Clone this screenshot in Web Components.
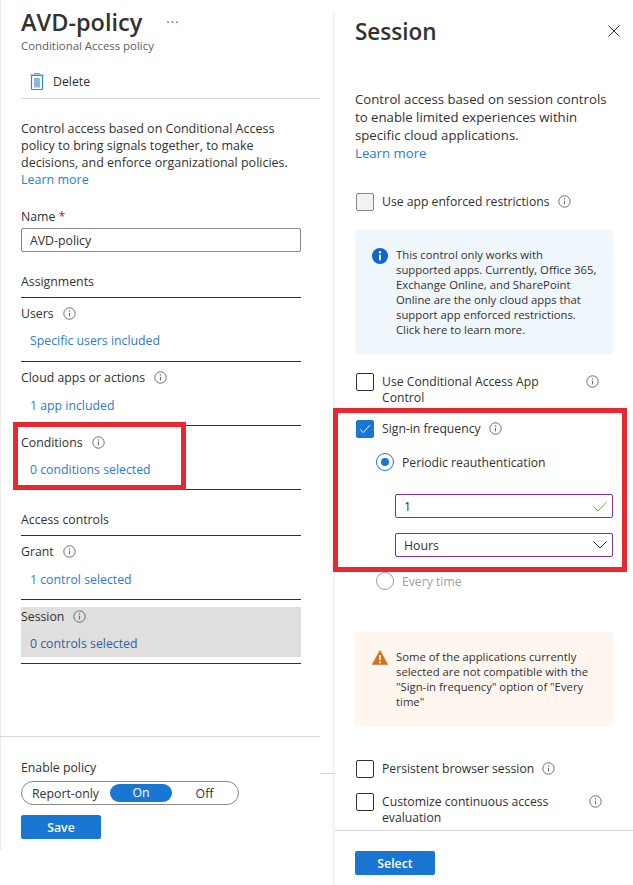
<!DOCTYPE html>
<html>
<head>
<meta charset="utf-8">
<title>AVD-policy</title>
<style>
  html, body { margin: 0; padding: 0; background: #fff; }
  body { font-family: "Open Sans", "Liberation Sans", sans-serif; color: #323130; width: 633px; height: 885px; overflow: hidden; position: relative; }
</style>
</head>
<body>
<az-page></az-page>

<script>
const INFO_SVG = `<svg width="13" height="13" viewBox="0 0 13 13" fill="none"><circle cx="6.5" cy="6.5" r="5.7" stroke="#6e6c6a" stroke-width="1"/><path d="M6.500 5.800v3.600" stroke="#6e6c6a" stroke-width="1.100"/><circle cx="6.500" cy="3.900" r=".75" fill="#6e6c6a"/></svg>`;

class AzInfo extends HTMLElement {
    constructor(){
        super();
        this.attachShadow({mode: 'open'});
        this.shadowRoot.innerHTML = `
        <style>
            :host { display: inline-flex; width: 13px; height: 13px; flex: none; }
        </style>
        ${INFO_SVG}`;
    }
}

// assignment row on the left blade: label, info icon, link and bottom rule
class AzRow extends HTMLElement {
    constructor(){
        super();
        this.attachShadow({mode: 'open'});
        this.shadowRoot.innerHTML = `
        <style>
            :host { display: block; width: 280px; border-bottom: 1px solid #323130; height: 64px; box-sizing: border-box; }
            .label { display: flex; align-items: center; gap: 9px; height: 17px; padding-top: var(--top, 7px); font-size: 12.3px; }
            .link { display: block; font-size: 12.3px; color: #2b7cd3; padding: var(--link, 10px) 0 0 9px; line-height: 17px; }
            :host(.active) { border-bottom: 0; height: 50px; background: #e1dfdd; }
            :host(.active) .label { padding-top: 1px; }
            :host(.active) .link { color: #2a62a8; }
        </style>
        <div class="label"><slot name="label"></slot><az-info></az-info></div>
        <span class="link"><slot></slot></span>`;
    }
}

class AzCheck extends HTMLElement {
    constructor(){
        super();
        this.attachShadow({mode: 'open'});
        this.shadowRoot.innerHTML = `
        <style>
            :host { display: flex; align-items: flex-start; width: 258px; margin-left: 1px; font-size: 12.2px; line-height: 16px; }
            .box { width: 18px; height: 18px; box-sizing: border-box; border: 1px solid #323130; border-radius: 2px; flex: none; margin-right: 8px; display: flex; align-items: center; justify-content: center; }
            .text { width: var(--text-w, auto); padding-top: 1px; }
            az-info { margin-left: 8px; margin-top: 2px; }
            svg { display: none; }
            :host([disabled]) .box { background: #f3f2f1; border-color: #8a8886; }
            :host([checked]) .box { background: #1976d2; border-color: #1976d2; }
            :host([checked]) svg { display: block; }
        </style>
        <span class="box"><svg width="12" height="10" viewBox="0 0 12 10" fill="none"><path d="M1 5.200 4.200 8.600 11 1.200" stroke="#fff" stroke-width="1"/></svg></span>
        <span class="text"><slot></slot></span>
        <az-info></az-info>`;
    }
}

class AzRadio extends HTMLElement {
    constructor(){
        super();
        this.attachShadow({mode: 'open'});
        this.shadowRoot.innerHTML = `
        <style>
            :host { display: flex; align-items: center; gap: 8px; font-size: 12.2px; height: 18px; }
            .dot { width: 18px; height: 18px; box-sizing: border-box; border-radius: 50%; border: 1px solid #1976d2; display: flex; align-items: center; justify-content: center; flex: none; }
            .dot i { width: 8px; height: 8px; border-radius: 50%; background: #1976d2; }
            :host([disabled]) { color: #a19f9d; }
            :host([disabled]) .dot { border-color: #a19f9d; }
            :host([disabled]) .dot i { display: none; }
        </style>
        <span class="dot"><i></i></span><span><slot></slot></span>`;
    }
}

class AzMessage extends HTMLElement {
    constructor(){
        super();
        const warning = this.getAttribute('kind') === 'warning';
        const icon = warning
            ? `<svg width="16" height="15" viewBox="0 0 16 15"><path d="M8 .5 15.800 14.500H.2Z" fill="#d9701f" stroke="#d9701f" stroke-linejoin="round" stroke-width=".6"/><path d="M8 5v5" stroke="#fff" stroke-width="1.700"/><circle cx="8" cy="12.200" r="1" fill="#fff"/></svg>`
            : `<svg width="16" height="16" viewBox="0 0 16 16"><circle cx="8" cy="8" r="8" fill="#0f66d0"/><path d="M8 6.800v5.400" stroke="#fff" stroke-width="2"/><circle cx="8" cy="4.200" r="1.200" fill="#fff"/></svg>`;
        this.attachShadow({mode: 'open'});
        this.shadowRoot.innerHTML = `
        <style>
            :host { display: flex; width: 258px; box-sizing: border-box; padding: 17px 16px 0 17px; border-radius: 2px; background: #eff6fc; font-size: 11.3px; line-height: 15px; }
            :host([kind=warning]) { background: #fff6f0; }
            .icon { flex: none; width: 16px; margin-right: 8px; margin-top: 1px; }
        </style>
        <span class="icon">${icon}</span><span><slot></slot></span>`;
    }
}

class AzButton extends HTMLElement {
    constructor(){
        super();
        this.attachShadow({mode: 'open'});
        this.shadowRoot.innerHTML = `
        <style>
            :host { display: flex; align-items: center; justify-content: center; width: 80px; height: 24px; background: #1976d2; color: #fff; font-size: 12.3px; font-weight: 600; border-radius: 2px; }
        </style>
        <slot></slot>`;
    }
}

class AzField extends HTMLElement {
    constructor(){
        super();
        this.attachShadow({mode: 'open'});
        this.shadowRoot.innerHTML = `
        <style>
            :host { display: flex; align-items: center; justify-content: space-between; box-sizing: border-box; width: 218px; height: 24px; padding: 0 5px 0 8px; border: 1px solid #862d9f; border-radius: 2px; font-size: 12.3px; }
            :host(.plain) { border-color: #8a8886; width: 280px; }
            svg { display: block; }
        </style>
        <span><slot></slot></span><slot name="end"></slot>`;
    }
}

class AzToggle extends HTMLElement {
    constructor(){
        super();
        this.attachShadow({mode: 'open'});
        this.shadowRoot.innerHTML = `
        <style>
            :host { display: flex; align-items: center; box-sizing: border-box; width: 218px; height: 24px; padding: 0 1px 0 10px; border: 1px solid #8a8886; border-radius: 12px; font-size: 12.3px; }
            .a { width: 78px; }
            .on { width: 62px; height: 18px; border-radius: 9px; background: #1976d2; color: #fff; text-align: center; line-height: 18px; }
            .off { flex: 1; text-align: center; }
        </style>
        <span class="a">Report-only</span><span class="on">On</span><span class="off">Off</span>`;
    }
}

class AzPolicyBlade extends HTMLElement {
    constructor(){
        super();
        this.attachShadow({mode: 'open'});
        this.shadowRoot.innerHTML = `
        <style>
            :host { display: block; width: 320px; height: 850px; box-sizing: border-box; padding-left: 21px; border-left: 1px solid #eceaea; margin-left: 0; }
            .pad { margin-left: -1px; }
            h1 { margin: 0; font-size: 23.5px; font-weight: 600; height: 38px; line-height: 44px; display: flex; gap: 24px; }
            h1 span { font-size: 13px; font-weight: 400; color: #605e5c; line-height: 44px; letter-spacing: 1px; }
            .sub { font-size: 11.4px; line-height: 15px; color: #605e5c; }
            .bar { display: flex; align-items: center; gap: 9px; height: 33px; padding-top: 12px; margin-left: 9px; font-size: 12.3px; }
            hr { border: 0; border-top: 1px solid #d8d6d4; margin: 0; }
            .bar + hr { width: 299px; }
            p { margin: 21px 0 0; font-size: 12.5px; line-height: 17px; width: 270px; }
            a { color: #2b7cd3; }
            .name { margin-top: 20px; font-size: 12.3px; line-height: 17px; height: 20px; }
            .name b { color: #a4262c; font-weight: 400; }
            h2 { margin: 0; font-size: 12.3px; font-weight: 400; width: 280px; border-bottom: 1px solid #323130; line-height: 17px; }
            .h1 { padding-top: 21px; padding-bottom: 7px; }
            .h2 { padding-top: 21px; padding-bottom: 7px; }
            az-row.active { margin-top: 7px; }
            .rule { width: 280px; border-top: 1px solid #323130; margin-top: 6px; }
            .foot { margin: 72px 0 0 -21px; width: 320px; }
            .foot div { margin: 22px 0 5px 21px; font-size: 12.3px; line-height: 17px; }
            az-toggle { margin-bottom: 10px; }
        </style>
        <div class="pad">
            <h1>AVD-policy <span>···</span></h1>
            <div class="sub">Conditional Access policy</div>
            <div class="bar">
                <svg width="14" height="17" viewBox="0 0 14 17" fill="none"><path d="M4.500 1.500V.5h5v1M0 2h14" stroke="#5b9bd5" stroke-width="1"/><rect x="1.500" y="2.500" width="11" height="14" rx="1" stroke="#2b88d8" stroke-width="1.200"/><rect x="4" y="5" width="6" height="9.500" fill="#8ab8e0"/></svg>
                Delete
            </div>
            <hr>
            <p>Control access based on Conditional Access policy to bring signals together, to make decisions, and enforce organizational policies.<br><a>Learn more</a></p>
            <div class="name">Name <b>*</b></div>
            <az-field class="plain">AVD-policy</az-field>
            <h2 class="h1">Assignments</h2>
            <az-row><span slot="label">Users</span>Specific users included</az-row>
            <az-row style="--link:11px"><span slot="label">Cloud apps or actions</span>1 app included</az-row>
            <az-row style="--top:8px"><span slot="label">Conditions</span>0 conditions selected</az-row>
            <h2 class="h2">Access controls</h2>
            <az-row style="--link:11px"><span slot="label">Grant</span>1 control selected</az-row>
            <az-row class="active"><span slot="label">Session</span>0 controls selected</az-row>
            <div class="rule"></div>
            <div class="foot">
                <hr>
                <div>Enable policy</div>
            </div>
            <az-toggle></az-toggle>
            <az-button>Save</az-button>
        </div>`;
    }
}

class AzSessionBlade extends HTMLElement {
    constructor(){
        super();
        this.attachShadow({mode: 'open'});
        this.shadowRoot.innerHTML = `
        <style>
            :host { display: block; width: 298px; box-sizing: border-box; padding-left: 20px; }
            header { display: flex; justify-content: space-between; align-items: center; height: 38px; width: 265px; }
            h1 { margin: 0; font-size: 22.5px; font-weight: 600; }
            p { margin: 40px 0 0; font-size: 13.2px; line-height: 18px; width: 265px; }
            a { color: #2b7cd3; }
            .c1 { margin-top: 31px; }
            .m1 { margin-top: 19px; height: 124px; }
            .c2 { margin-top: 19px; --text-w: 196px; height: 47px; }
            .c3 { height: 33px; }
            .sub { margin-left: 21px; }
            .fields { margin: 23px 0 0 40px; display: flex; flex-direction: column; gap: 15px; }
            .r2 { margin: 15px 0 0 21px; }
            .m2 { margin-top: 42px; height: 94px; }
            .c4 { margin-top: 34px; }
            .c5 { margin-top: 15px; --text-w: 199px; height: 37px; }
            hr { border: 0; border-top: 1px solid #d8d6d4; margin: 0 0 0 -20px; width: 298px; }
            az-button { margin-top: 20px; }
        </style>
        <header>
            <h1>Session</h1>
            <svg width="12" height="12" viewBox="0 0 12 12" fill="none"><path d="M.5.5l11 11M11.500.5l-11 11" stroke="#323130" stroke-width="1"/></svg>
        </header>
        <p>Control access based on session controls to enable limited experiences within specific cloud applications.<br><a>Learn more</a></p>
        <az-check class="c1" disabled>Use app enforced restrictions</az-check>
        <az-message class="m1">This control only works with supported apps. Currently, Office 365, Exchange Online, and SharePoint Online are the only cloud apps that support app enforced restrictions. Click here to learn more.</az-message>
        <az-check class="c2">Use Conditional Access App Control</az-check>
        <az-check class="c3" checked>Sign-in frequency</az-check>
        <az-radio class="sub">Periodic reauthentication</az-radio>
        <div class="fields">
            <az-field>1<svg slot="end" width="14" height="11" viewBox="0 0 14 11" fill="none"><path d="M.5 5.500 5 10 13.500 1" stroke="#6bb33c" stroke-width="1"/></svg></az-field>
            <az-field>Hours<svg slot="end" width="14" height="8" viewBox="0 0 14 8" fill="none"><path d="M.5.500 7 7 13.500.500" stroke="#323130" stroke-width="1"/></svg></az-field>
        </div>
        <az-radio class="r2" disabled>Every time</az-radio>
        <az-message class="m2" kind="warning">Some of the applications currently selected are not compatible with the "Sign-in frequency" option of "Every time"</az-message>
        <az-check class="c4">Persistent browser session</az-check>
        <az-check class="c5">Customize continuous access evaluation</az-check>
        <hr>
        <az-button>Select</az-button>`;
    }
}

// red annotation frame drawn over the screenshot
class AzMark extends HTMLElement {
    constructor(){
        super();
        this.attachShadow({mode: 'open'});
        this.shadowRoot.innerHTML = `
        <style>
            :host { display: block; position: absolute; box-sizing: border-box; border: 5px solid #e8282e; pointer-events: none; }
        </style>`;
    }
}

class AzPage extends HTMLElement {
    constructor(){
        super();
        this.attachShadow({mode: 'open'});
        this.shadowRoot.innerHTML = `
        <style>
            :host { display: flex; width: 633px; height: 885px; align-items: flex-start; }
            .gutter { width: 15px; height: 873px; margin-top: 12px; background: linear-gradient(to right, transparent 10px, #f2f2f2 15px); flex: none; box-sizing: border-box; padding-top: 761px; }
            .gutter i { display: block; border-top: 1px solid #d8d6d4; }
            az-session-blade { margin-top: 12px; }
        </style>
        <az-policy-blade></az-policy-blade>
        <div class="gutter"><i></i></div>
        <az-session-blade></az-session-blade>
        <az-mark style="left:13px;top:422px;width:173px;height:68px"></az-mark>
        <az-mark style="left:333px;top:408px;width:294px;height:164px"></az-mark>`;
    }
}

customElements.define('az-info', AzInfo);
customElements.define('az-row', AzRow);
customElements.define('az-check', AzCheck);
customElements.define('az-radio', AzRadio);
customElements.define('az-message', AzMessage);
customElements.define('az-button', AzButton);
customElements.define('az-field', AzField);
customElements.define('az-toggle', AzToggle);
customElements.define('az-policy-blade', AzPolicyBlade);
customElements.define('az-session-blade', AzSessionBlade);
customElements.define('az-mark', AzMark);
customElements.define('az-page', AzPage);
</script>
</body>
</html>
